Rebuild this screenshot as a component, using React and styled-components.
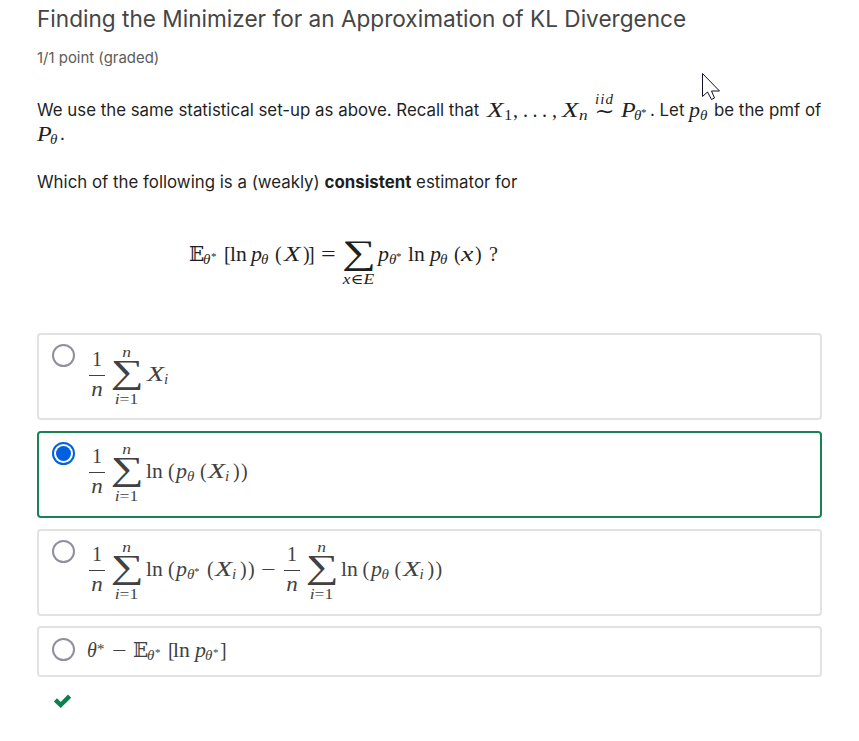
import React from "react";
import styled, { createGlobalStyle, css } from "styled-components";

const GlobalStyle = createGlobalStyle`
  * { box-sizing: border-box; }
  body { margin: 0; background: #fff; overflow: hidden; }
`;

const Page = styled.main`
  width: 859px;
  height: 741px;
  padding: 4px 37px 0;
  background: #fff;
  color: #1f1f1f;
  font-family: Inter, sans-serif;
  overflow: hidden;
`;

const Title = styled.h1`
  margin: 0;
  height: 30px;
  font-size: 22.6px;
  line-height: 30px;
  font-weight: 400;
  color: #454545;
  white-space: nowrap;
`;

const Score = styled.div`
  margin-top: 14px;
  height: 20px;
  font-size: 14.95px;
  line-height: 20px;
  color: #5c5c5c;
`;

const Paragraph = styled.p`
  margin: ${(p) => p.$top}px 0 0;
  font-size: 16.85px;
  line-height: 24px;
  white-space: nowrap;
`;

const Line = styled.span`
  display: flex;
  height: 24px;
`;

const Words = styled.span`
  flex: none;
  width: ${(p) => (p.$w ? `${p.$w}px` : "auto")};
`;

const mathFont = css`
  font-family: "Liberation Serif", "DejaVu Serif", serif;
`;

const FormulaRow = styled.span`
  ${mathFont}
  display: flex;
  flex: none;
  align-items: flex-start;
  height: ${(p) => p.$h || 24}px;
  white-space: nowrap;
`;

const Atom = styled.span`
  flex: none;
  width: ${(p) => p.$w}px;
  margin-top: ${(p) => p.$y - 12 - 0.3375 * p.$size}px;
  font-size: ${(p) => p.$size}px;
  line-height: 24px;
  font-style: ${(p) => (p.$italic ? "italic" : "normal")};
  transform: scaleX(${(p) => p.$sx});
  transform-origin: left center;
`;

const FractionBox = styled.span`
  flex: none;
  width: ${(p) => p.$w}px;
  margin-top: ${(p) => p.$y - 32}px;
`;

const Numerator = styled.span`
  display: block;
  width: 16px;
  height: 27px;
  border-bottom: 1px solid currentColor;
  font-size: 20px;
  line-height: 20px;
  text-align: center;
`;

const Denominator = styled.span`
  display: block;
  width: 16px;
  margin-top: 3px;
  font-size: 20px;
  line-height: 20px;
  font-style: italic;
  text-align: center;
  transform: scaleX(1.15);
`;

const SumBox = styled.span`
  flex: none;
  width: ${(p) => p.$w}px;
  margin-top: ${(p) => p.$y - 35}px;
`;

const Limit = styled.span`
  display: block;
  width: 29px;
  height: 14px;
  font-size: 14px;
  line-height: 14px;
  font-style: ${(p) => (p.$italic ? "italic" : "normal")};
  text-align: center;
  white-space: nowrap;
  transform: scaleX(1.25);
`;

const SumSign = styled.span`
  display: block;
  height: 33px;
  margin-left: -1.5px;
  font-size: ${(p) => p.$size}px;
  line-height: 24px;
  transform: scaleX(1.38);
  transform-origin: left center;
`;

const IidBox = styled.span`
  flex: none;
  width: ${(p) => p.$w}px;
  margin-top: -7px;
  text-align: center;
  padding-right: 6px;
`;

const IidLabel = styled.span`
  display: block;
  font-size: 15px;
  line-height: 16px;
  letter-spacing: 1px;
  font-style: italic;
`;

const Tilde = styled.span`
  display: block;
  font-size: 20px;
  line-height: 8px;
  transform: scaleX(1.2);
`;

const DisplayMath = styled.div`
  height: 139px;
  padding: 35px 0 0 152px;
`;

const Options = styled.div`
  display: grid;
  grid-template-rows: 87px 87px 87px 50px;
  row-gap: 11px;
  color: #414141;
`;

const Option = styled.label`
  display: flex;
  align-items: flex-start;
  padding: ${(p) => p.$pad || 9}px 0 0 13px;
  margin-top: ${(p) => p.$shift || 0}px;
  border: 2px solid ${(p) => (p.$selected ? "#178253" : "#e2e2e2")};
  border-radius: 4px;
`;

const Radio = styled.span`
  flex: none;
  width: 23px;
  height: 23px;
  padding: 2px;
  margin-right: ${(p) => p.$gap}px;
  border: 2px solid ${(p) => (p.$selected ? "#0060df" : "#8f8f9d")};
  border-radius: 50%;
  &::before {
    content: "";
    display: block;
    height: 15px;
    border-radius: 50%;
    background: ${(p) => (p.$selected ? "#0060df" : "transparent")};
  }
`;

const Check = styled.svg`
  display: block;
  margin: 17px 0 0 16px;
`;

const Pointer = styled.svg`
  position: absolute;
  left: 701px;
  top: 72px;
`;

const kinds = {
  main: { size: 20, dy: 0 },
  it: { size: 20, dy: 0, italic: true },
  sub: { size: 15, dy: 3 },
  subit: { size: 15, dy: 3, italic: true },
  star: { size: 11, dy: -1 },
  sup: { size: 15, dy: -3 },
};

// Each item is [x, kind, content, horizontal stretch]; an item runs up to the next x.
function Formula({ items, end, y, h }) {
  return (
    <FormulaRow $h={h}>
      {items.map(([x, kind, content, sx = 1], i) => {
        const w = (i + 1 < items.length ? items[i + 1][0] : end) - x;
        if (kind === "frac") {
          return (
            <FractionBox key={i} $w={w} $y={y}>
              <Numerator>1</Numerator>
              <Denominator>n</Denominator>
            </FractionBox>
          );
        }
        if (kind === "sum") {
          return (
            <SumBox key={i} $w={w} $y={y}>
              <Limit $italic>{content[0]}</Limit>
              <SumSign $size={content[2] || 33.5}>∑</SumSign>
              <Limit>{content[1]}</Limit>
            </SumBox>
          );
        }
        if (kind === "iid") {
          return (
            <IidBox key={i} $w={w}>
              <IidLabel>iid</IidLabel>
              <Tilde>∼</Tilde>
            </IidBox>
          );
        }
        const k = kinds[kind];
        return (
          <Atom key={i} $w={w} $y={y + k.dy} $size={k.size} $italic={k.italic} $sx={sx}>
            {content}
          </Atom>
        );
      })}
    </FormulaRow>
  );
}

const indexLimit = <><i>i</i>=1</>;

const average = (x) => [
  [x, "frac"],
  [x + 23, "sum", ["n", indexLimit]],
];

const logDensity = (x) => [
  [x, "main", "ln", 1.08],
  [x + 22, "main", "("],
  [x + 30, "it", "p", 1.1],
  [x + 41, "subit", "θ"],
  [x + 54, "main", "("],
  [x + 62, "it", "X", 1.4],
  [x + 79, "subit", "i"],
  [x + 87, "main", ")"],
  [x + 95, "main", ")"],
];

const logDensityStar = (x) => [
  [x, "main", "ln", 1.08],
  [x + 22, "main", "("],
  [x + 30, "it", "p", 1.1],
  [x + 41, "subit", "θ"],
  [x + 48, "star", "*"],
  [x + 61, "main", "("],
  [x + 69, "it", "X", 1.4],
  [x + 86, "subit", "i"],
  [x + 94, "main", ")"],
  [x + 102, "main", ")"],
];

const options = [
  [...average(89), [147, "it", "X", 1.4], [164, "subit", "i"]],
  [...average(89), ...logDensity(146)],
  [...average(89), ...logDensityStar(146), [261, "main", "−", 1.3], [284, "frac"], [307, "sum", ["n", indexLimit]], ...logDensity(340.5)],
];

export default function App() {
  return (
    <Page>
      <GlobalStyle />
      <Title>Finding the Minimizer for an Approximation of KL Divergence</Title>
      <Score>1/1 point (graded)</Score>
      <Paragraph $top={30}>
        <Line>
          <Words $w={450}>We use the same statistical set-up as above. Recall that</Words>
          <Formula
            y={19}
            end={650}
            items={[
              [487, "it", "X", 1.35],
              [503.5, "sub", "1", 1.1],
              [513, "main", ","],
              [523, "main", "."],
              [532.5, "main", "."],
              [542, "main", "."],
              [552, "main", ","],
              [562, "it", "X", 1.35],
              [579, "subit", "n", 1.15],
              [594, "iid"],
              [621, "it", "P", 1.2],
              [634, "subit", "θ"],
              [641, "star", "*"],
            ]}
          />
          <Words $w={39}>. Let</Words>
          <Formula y={19} end={714} items={[[689, "it", "p", 1.1], [700, "subit", "θ"]]} />
          <Words>be the pmf of</Words>
        </Line>
        <Line>
          <Formula y={19} end={60} items={[[37, "it", "P", 1.2], [50, "subit", "θ"]]} />
          <Words>.</Words>
        </Line>
      </Paragraph>
      <Paragraph $top={24}>
        Which of the following is a (weakly) <b>consistent</b> estimator for
      </Paragraph>
      <DisplayMath>
        <Formula
          y={32}
          h={60}
          end={500}
          items={[
            [189, "main", "𝔼"],
            [203, "subit", "θ"],
            [211, "star", "*"],
            [224, "main", "["],
            [230, "main", "ln", 1.08],
            [251, "it", "p", 1.1],
            [261, "subit", "θ"],
            [275, "main", "("],
            [284, "it", "X", 1.35],
            [303, "main", ")"],
            [308, "main", "]"],
            [321, "main", "=", 1.3],
            [343.5, "sum", ["\u00a0", <i>x∈E</i>, 34.5]],
            [378, "it", "p", 1.1],
            [389, "subit", "θ"],
            [396, "star", "*"],
            [408, "main", "ln", 1.08],
            [430, "it", "p", 1.1],
            [440, "subit", "θ"],
            [454, "main", "("],
            [461, "it", "x", 1.4],
            [475, "main", ")"],
            [489, "main", "?"],
          ]}
        />
      </DisplayMath>
      <Options>
        {options.map((items, i) => (
          <Option key={i} $selected={i === 1}>
            <Radio $selected={i === 1} $gap={14} />
            <Formula items={items} y={i === 0 ? 37 : 36} h={60} end={450} />
          </Option>
        ))}
        <Option $pad={10} $shift={-1}>
          <Radio $gap={12} />
          <Formula
            y={19}
            end={230}
            items={[
              [87, "it", "θ"],
              [97, "sup", "*"],
              [112, "main", "−", 1.3],
              [133, "main", "𝔼"],
              [147, "subit", "θ"],
              [155, "star", "*"],
              [168, "main", "["],
              [173, "main", "ln", 1.08],
              [195, "it", "p", 1.1],
              [205, "subit", "θ"],
              [213, "star", "*"],
              [220, "main", "]"],
            ]}
          />
        </Option>
      </Options>
      <Check width="20" height="15" viewBox="0 0 20 15">
        <path d="M.8 7.5 4 4.3 7.7 8 15 .6 18.2 3.8 7.7 14Z" fill="#0b8050" />
      </Check>
      <Pointer width="20" height="30" viewBox="0 0 20 30">
        <path d="M1.5 1.5V24.5L6.5 20 10.5 27.5 13.5 26 10.5 19H18.5Z" fill="#fff" stroke="#111122" />
      </Pointer>
    </Page>
  );
}
